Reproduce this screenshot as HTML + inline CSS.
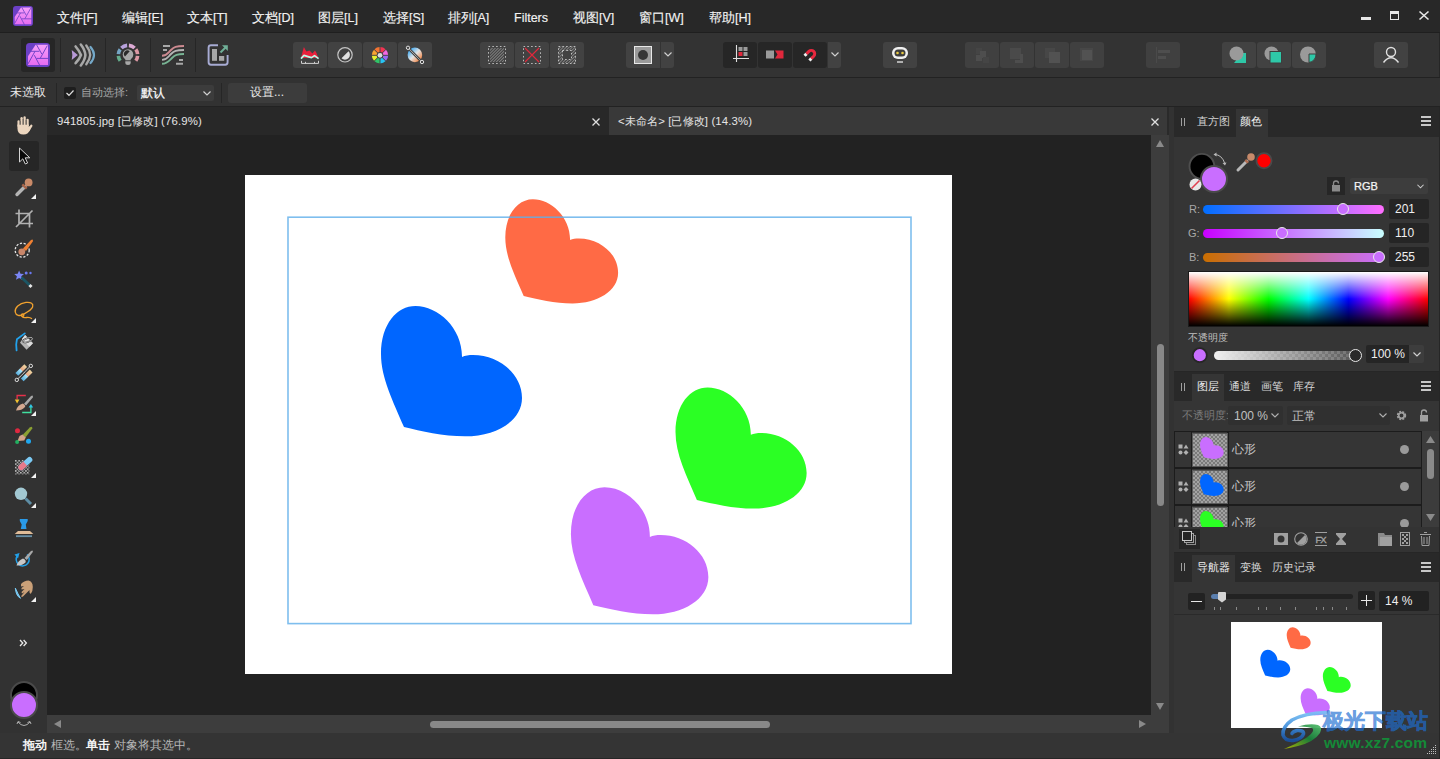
<!DOCTYPE html>
<html><head><meta charset="utf-8">
<style>
*{margin:0;padding:0;box-sizing:border-box}
html,body{width:1440px;height:759px;overflow:hidden;background:#2b2b2b;font-family:"Liberation Sans",sans-serif;font-size:12px;color:#e6e6e6}
.a{position:absolute}
.t{position:absolute;white-space:nowrap;line-height:1}
svg{position:absolute;overflow:visible}
.mn{position:absolute;top:12px;font-size:12.5px;color:#f2f2f2;-webkit-text-stroke:0.15px #f2f2f2;white-space:nowrap;line-height:1}
.b34{position:absolute;width:34px;height:26px;top:42px;background:#424242;border-radius:3px}
.bd{position:absolute;width:34px;height:26px;top:42px;background:#262626;border-radius:3px}
.bx{position:absolute;width:34px;height:26px;top:42px;background:#404040;border-radius:3px}
.sep{position:absolute;top:38px;width:1px;height:34px;background:#262626}
.ptab{position:absolute;font-size:11px;color:#d4d4d4;white-space:nowrap;line-height:1}
</style></head><body>
<svg width="0" height="0" style="position:absolute"><defs>
<linearGradient id="lg" x1="0" y1="0" x2="0" y2="1"><stop offset="0" stop-color="#f6a0fa"/><stop offset="1" stop-color="#e66cf2"/></linearGradient>
<symbol id="aplogo" viewBox="0 0 24 24">
<rect x="0" y="0" width="24" height="24" rx="3.5" fill="#6c40c6"/>
<path d="M9.6 1.8 L22 1.8 L22 22 L2 22 L2 13.2 Z" fill="url(#lg)"/>
<path d="M10.5 1.7 L15.8 11 M21.3 2.6 L14.2 15.4 M22.5 15.4 L10.4 15.4 M8.3 12.2 L13.8 22.5 M9 8.3 L2 20.9 M4.6 8.3 L13.4 8.3" stroke="#6c40c6" stroke-width="0.95" fill="none"/>
</symbol></defs></svg>
<!-- ============ MENU BAR ============ -->
<div class="a" style="left:0;top:0;width:1440px;height:32px;background:#282828"></div>
<div class="a" style="left:0;top:32px;width:1440px;height:1px;background:#1f1f1f"></div>
<!-- app logo -->
<svg style="left:13px;top:6px" width="20" height="20"><use href="#aplogo"/></svg>
<div class="mn" style="left:57px">文件[F]</div>
<div class="mn" style="left:122px">编辑[E]</div>
<div class="mn" style="left:187px">文本[T]</div>
<div class="mn" style="left:252px">文档[D]</div>
<div class="mn" style="left:318px">图层[L]</div>
<div class="mn" style="left:383px">选择[S]</div>
<div class="mn" style="left:448px">排列[A]</div>
<div class="mn" style="left:514px">Filters</div>
<div class="mn" style="left:573px">视图[V]</div>
<div class="mn" style="left:639px">窗口[W]</div>
<div class="mn" style="left:709px">帮助[H]</div>
<!-- window controls -->
<div class="a" style="left:1361px;top:17px;width:10px;height:3px;background:#e6e6e6"></div>
<div class="a" style="left:1390px;top:11px;width:9px;height:9px;border:1.5px solid #e6e6e6;border-top-width:3px"></div>
<svg style="left:1419px;top:11px" width="10" height="9" viewBox="0 0 10 9"><path d="M0.5 0.5 L9.5 8.5 M9.5 0.5 L0.5 8.5" stroke="#e6e6e6" stroke-width="1.6"/></svg>

<!-- ============ TOOLBAR ============ -->
<div class="a" style="left:0;top:33px;width:1440px;height:44px;background:#333333"></div>
<div class="a" style="left:0;top:77px;width:1440px;height:1px;background:#222"></div>
<div class="a" style="left:21px;top:38px;width:34px;height:34px;background:#262626;border-radius:3px"></div>
<svg style="left:26px;top:43px" width="24" height="24"><use href="#aplogo"/></svg>
<div class="sep" style="left:60px"></div>
<div class="sep" style="left:105px"></div>
<div class="sep" style="left:150px"></div>
<div class="sep" style="left:195px"></div>
<!-- liquify persona -->
<svg style="left:68px;top:40px" width="30" height="30" viewBox="0 0 30 30">
<path d="M3.7 10 L9.8 15 L3.7 20 Q5 15 3.7 10 Z" fill="#b89ad8"/>
<path d="M7.6 6.5 Q11.5 11 13 15 Q11.5 19 7.6 23.2" stroke="#a8a8a8" stroke-width="2.6" fill="none" stroke-linecap="round"/>
<path d="M12.8 4.5 Q17 10 17.4 15 Q17 20 12.8 25.5" stroke="#a8a8a8" stroke-width="2.6" fill="none" stroke-linecap="round"/>
<path d="M18.3 5.5 Q21.8 10 22.2 15 Q21.8 20 18.3 24.3" stroke="#a8a8a8" stroke-width="2.4" fill="none" stroke-linecap="round"/>
<path d="M22.5 7 Q26 11 26 15 Q26 19 22.5 23" stroke="#74a8c8" stroke-width="2.2" fill="none" stroke-linecap="round"/>
</svg>
<!-- develop persona -->
<svg style="left:116px;top:43px" width="24" height="24" viewBox="0 0 24 24">
<g transform="translate(12 12)" fill="none" stroke-width="3.6">
<path d="M-0.9 -9.6 A9.6 9.6 0 0 0 -6.6 -7" stroke="#b8a2dc"/>
<path d="M0.9 -9.6 A9.6 9.6 0 0 1 6.6 -7" stroke="#dcaad4"/>
<path d="M7.8 -5.6 A9.6 9.6 0 0 1 9.6 -0.8" stroke="#dc98a4"/>
<path d="M9.6 0.8 A9.6 9.6 0 0 1 7.8 5.8" stroke="#dc98a4"/>
<path d="M-7.8 -5.6 A9.6 9.6 0 0 0 -9.6 -0.8" stroke="#74a4c4"/>
<path d="M-9.6 0.8 A9.6 9.6 0 0 0 -7.8 5.8" stroke="#64ac8c"/>
</g>
<circle cx="12" cy="11.5" r="5.3" fill="#a8a8a8"/>
<path d="M9 13.4 L13.7 8.3 A3.47 3.47 0 0 0 9 13.4 Z" fill="#2a2a2a"/>
<rect x="9.3" y="15.5" width="5.4" height="1.8" fill="#a8a8a8"/>
<path d="M9.3 18.2 L14.7 18.2 L14.7 19.5 Q14.7 22 12 22 Q9.3 22 9.3 19.5 Z" fill="#a8a8a8"/>
</svg>
<!-- tone mapping + export -->
<svg style="left:155px;top:38px" width="80" height="34" viewBox="155 38 80 34">
<g stroke-width="1.9" fill="none" stroke-linecap="butt">
<path d="M163 46 L170 46 M163 50 L167 50 M179 60 L183 60 M176 63.8 L183 63.8" stroke="#a8a8a8"/>
<path d="M162 55.8 C167 55.8 168 53 171 50 C174 47 176 46 184 46" stroke="#cc8a90"/>
<path d="M162 59.9 C167 59.9 168 57 171 54 C174 51 176 50 184 50" stroke="#b4b4b4"/>
<path d="M162 63.8 C167 63.8 169 61 172 58 C175 55 177 54 184 54" stroke="#78b494"/>
</g>
<path d="M218 45.2 L211 45.2 Q208.6 45.2 208.6 47.6 L208.6 62.3 Q208.6 64.7 211 64.7 L225.2 64.7 Q227.6 64.7 227.6 62.3 L227.6 55" stroke="#a8acd4" stroke-width="1.9" fill="none"/>
<rect x="212" y="49" width="5" height="11.8" fill="#a8a8a8"/>
<rect x="219" y="56" width="5.2" height="4.8" fill="#a8a8a8"/>
<path d="M220.5 52.5 L226.5 46.5" stroke="#70b098" stroke-width="1.9"/>
<path d="M222 45.3 L227.8 45.3 L227.8 51 Z" fill="#70b098"/>
</svg>
<!-- adjustment buttons -->
<div class="b34" style="left:293px"></div>
<div class="b34" style="left:328px"></div>
<div class="b34" style="left:363px"></div>
<div class="b34" style="left:398px"></div>
<svg style="left:290px;top:40px" width="70" height="30" viewBox="290 40 70 30">
<path d="M301.5 56 L302.5 52 L303.9 47 L305.5 50 L306.5 51.5 L309.5 50.5 L312.5 53.5 L315 50.5 L316.5 53 L317.8 56.5 L317.8 58 L301.5 58 Z" fill="#e8203c"/>
<path d="M301 58.6 L304 55.4 L308 56.6 L311.5 57.6 L314.5 55.6 L318.6 58.6" stroke="#bcf8e8" stroke-width="1.7" fill="none" stroke-linejoin="round"/>
<path d="M301.5 60.8 L301.5 63.4 L318.5 63.4 L318.5 60.8 M305.5 61.8 L305.5 63.4 M314.5 61.8 L314.5 63.4" stroke="#d0d0d0" stroke-width="1" fill="none"/>
<circle cx="345" cy="54.8" r="7.2" stroke="#c4c4c4" stroke-width="1.2" fill="none"/>
<path d="M341.5 58.3 L348.5 51.3 A4.95 4.95 0 0 1 341.5 58.3 Z" fill="#e2e2e2"/>
</svg>
<svg style="left:366px;top:42px" width="64" height="26" viewBox="366 42 64 26">
<g transform="translate(380 55.3)">
<path d="M0 0 L0 -8.2 A8.2 8.2 0 0 1 5.8 -5.8 Z" fill="#f23452"/>
<path d="M0 0 L5.8 -5.8 A8.2 8.2 0 0 1 8.2 0 Z" fill="#f468e4"/>
<path d="M0 0 L8.2 0 A8.2 8.2 0 0 1 5.8 5.8 Z" fill="#9868f4"/>
<path d="M0 0 L5.8 5.8 A8.2 8.2 0 0 1 0 8.2 Z" fill="#28c4f4"/>
<path d="M0 0 L0 8.2 A8.2 8.2 0 0 1 -5.8 5.8 Z" fill="#30c468"/>
<path d="M0 0 L-5.8 5.8 A8.2 8.2 0 0 1 -8.2 0 Z" fill="#e4f030"/>
<path d="M0 0 L-8.2 0 A8.2 8.2 0 0 1 -5.8 -5.8 Z" fill="#f8a432"/>
<path d="M0 0 L-5.8 -5.8 A8.2 8.2 0 0 1 0 -8.2 Z" fill="#f47432"/>
<path d="M0 -9 L0 9 M-9 0 L9 0 M-6.5 -6.5 L6.5 6.5 M6.5 -6.5 L-6.5 6.5" stroke="#424242" stroke-width="0.9"/>
<circle r="3.3" fill="#424242"/>
<circle r="2.4" fill="#dcdcdc"/>
</g>
<defs><linearGradient id="bw2" x1="0" y1="0" x2="1" y2="1"><stop offset="0.1" stop-color="#2ea4f4"/><stop offset="0.5" stop-color="#e4e4e4"/><stop offset="0.9" stop-color="#f47c34"/></linearGradient></defs>
<circle cx="414.9" cy="54.9" r="7.3" fill="url(#bw2)"/>
<path d="M408 47.8 L422 62" stroke="#424242" stroke-width="2.6"/>
<path d="M408 47.8 L422 62" stroke="#e0e0e0" stroke-width="1" stroke-dasharray="1 0.5"/>
<circle cx="408" cy="47.8" r="1.7" fill="#424242" stroke="#e0e0e0" stroke-width="1"/>
<circle cx="422" cy="62" r="1.7" fill="#424242" stroke="#e0e0e0" stroke-width="1"/>
</svg>
<!-- selection buttons -->
<div class="b34" style="left:480px"></div>
<div class="b34" style="left:515px"></div>
<div class="b34" style="left:550px"></div>
<svg style="left:488px;top:46px" width="18" height="18" viewBox="0 0 18 18">
<defs><pattern id="hatch" width="2.1" height="2.1" patternUnits="userSpaceOnUse" patternTransform="rotate(45)"><rect width="0.8" height="2.1" fill="#8c8c8c"/></pattern></defs>
<rect x="2" y="2" width="14" height="14" fill="url(#hatch)"/>
<rect x="0.5" y="0.5" width="17" height="17" fill="none" stroke="#c8c8c8" stroke-dasharray="1.6 2.2" stroke-width="0.9"/>
</svg>
<svg style="left:523px;top:46px" width="18" height="18" viewBox="0 0 18 18">
<rect x="0.5" y="0.5" width="17" height="17" fill="none" stroke="#c8c8c8" stroke-dasharray="1.6 2.2" stroke-width="0.9"/>
<path d="M2 2 L16 16 M16 2 L2 16" stroke="#e0283c" stroke-width="1.2"/>
</svg>
<svg style="left:558px;top:46px" width="18" height="18" viewBox="0 0 18 18">
<rect x="0.5" y="0.5" width="17" height="17" fill="url(#hatch)" stroke="#c8c8c8" stroke-dasharray="1.6 2.2" stroke-width="0.9"/>
<rect x="4.5" y="4.5" width="9" height="9" fill="#424242" stroke="#d0d0d0" stroke-dasharray="1.6 2.2" stroke-width="0.9"/>
</svg>
<!-- quick mask -->
<div class="a" style="left:626px;top:42px;width:34px;height:26px;background:#424242;border-radius:3px 0 0 3px"></div>
<div class="a" style="left:661px;top:42px;width:13px;height:26px;background:#424242;border-radius:0 3px 3px 0"></div>
<div class="a" style="left:634px;top:46px;width:18px;height:18px;background:#9a9a9a;border:1.5px solid #e8e8e8"></div>
<div class="a" style="left:638px;top:50px;width:10px;height:10px;background:#363636;border-radius:50%"></div>
<svg style="left:664px;top:52px" width="8" height="5" viewBox="0 0 8 5"><path d="M0.5 0.5 L4 4 L7.5 0.5" stroke="#d0d0d0" stroke-width="1.2" fill="none"/></svg>
<!-- snapping -->
<div class="bd" style="left:723px"></div>
<div class="bd" style="left:758px"></div>
<div class="bd" style="left:793px"></div>
<div class="a" style="left:828px;top:42px;width:13px;height:26px;background:#424242;border-radius:0 3px 3px 0"></div>
<svg style="left:831px;top:52px" width="8" height="5" viewBox="0 0 8 5"><path d="M0.5 0.5 L4 4 L7.5 0.5" stroke="#d0d0d0" stroke-width="1.2" fill="none"/></svg>
<svg style="left:733px;top:45px" width="17" height="17" viewBox="0 0 17 17">
<path d="M3.5 0 L3.5 17 M0 13.5 L16 13.5" stroke="#e0e0e0" stroke-width="1.1"/>
<rect x="5.5" y="2" width="4" height="4" fill="#9a9a9a"/><rect x="10.5" y="2" width="4" height="4" fill="#9a9a9a"/>
<rect x="5.5" y="7" width="4" height="4" fill="#e0283c"/><rect x="10.5" y="7" width="4" height="4" fill="#9a9a9a"/>
</svg>
<svg style="left:766px;top:50px" width="18" height="9" viewBox="0 0 18 9">
<rect x="0" y="0.5" width="8" height="8" fill="#9a9a9a"/>
<path d="M9 0.5 L17.5 0.5 L17.5 8.5 L9 8.5 L11.5 4.5 Z" fill="#e0283c"/>
</svg>
<svg style="left:795px;top:42px" width="32" height="26" viewBox="795 42 32 26">
<g transform="translate(811.3 53.8) rotate(45)">
<path d="M-3.4 3.5 L-3.4 0 A3.4 3.4 0 0 1 3.4 0 L3.4 3.5" stroke="#e8283e" stroke-width="3" fill="none"/>
<rect x="-4.9" y="3.5" width="3" height="2.6" fill="#f0f0f0"/>
<rect x="1.9" y="3.5" width="3" height="2.6" fill="#f0f0f0"/>
</g>
</svg>
<!-- assistant -->
<div class="b34" style="left:883px"></div>
<svg style="left:891px;top:46px" width="18" height="18" viewBox="0 0 18 18">
<rect x="1" y="1" width="16" height="12" rx="6" fill="#f0f0f0"/>
<rect x="3.5" y="3.5" width="11" height="7" rx="3.5" fill="#3d3d3d"/>
<circle cx="6.5" cy="7" r="1.3" fill="#e8c840"/><circle cx="11.5" cy="7" r="1.3" fill="#e8c840"/>
<rect x="6" y="15" width="6" height="2" fill="#b0b0b0"/>
</svg>
<!-- disabled arrange -->
<div class="bx" style="left:965px"></div>
<div class="bx" style="left:1000px"></div>
<div class="bx" style="left:1035px"></div>
<div class="bx" style="left:1070px"></div>
<div class="bx" style="left:1146px"></div>
<svg style="left:973px;top:46px" width="18" height="18" viewBox="0 0 18 18" opacity="0.55">
<rect x="3" y="2" width="6" height="6" fill="#4a4a4a"/><rect x="3" y="9" width="6" height="6" fill="#5a5a5a"/><rect x="7" y="5" width="6" height="7" fill="#5a5a5a"/><rect x="10" y="11" width="6" height="6" fill="#4a4a4a"/>
</svg>
<svg style="left:1008px;top:46px" width="18" height="18" viewBox="0 0 18 18">
<rect x="2" y="2" width="11" height="11" fill="#4a4a4a"/><path d="M15 8 L15 17 L7 17 L7 14 L12 14 L12 8 Z" fill="#4e4e4e"/>
</svg>
<svg style="left:1043px;top:46px" width="18" height="18" viewBox="0 0 18 18">
<rect x="2" y="2" width="10" height="10" fill="#474747"/><rect x="6" y="6" width="11" height="11" fill="#525252"/>
</svg>
<svg style="left:1078px;top:46px" width="18" height="18" viewBox="0 0 18 18">
<rect x="2" y="2" width="13" height="13" fill="#474747"/><rect x="4" y="4" width="10" height="10" fill="#525252"/>
</svg>
<svg style="left:1154px;top:46px" width="18" height="18" viewBox="0 0 18 18">
<rect x="2" y="1" width="1" height="16" fill="#4a4a4a"/><rect x="4" y="4" width="12" height="3" fill="#4e4e4e"/><rect x="4" y="10" width="8" height="3" fill="#4e4e4e"/>
</svg>
<!-- geometry -->
<div class="b34" style="left:1222px"></div>
<div class="b34" style="left:1257px"></div>
<div class="b34" style="left:1292px"></div>
<svg style="left:1229px;top:46px" width="20" height="18" viewBox="0 0 20 18">
<path d="M9 12 L17 12 L17 17 L5 17 Z" fill="#2ec8a8"/><path d="M12 7 L17 7 L17 17 L7 17 Z" fill="#2ec8a8"/>
<circle cx="7.5" cy="7.5" r="7" fill="#9a9a9a"/>
</svg>
<svg style="left:1264px;top:46px" width="20" height="18" viewBox="0 0 20 18">
<circle cx="7.5" cy="7.5" r="7" fill="#9a9a9a"/>
<rect x="6" y="5.5" width="11.5" height="11.5" fill="#2ec8a8" stroke="#3d3d3d" stroke-width="1"/>
</svg>
<svg style="left:1300px;top:46px" width="20" height="18" viewBox="0 0 20 18">
<circle cx="8" cy="8.5" r="8" fill="#9a9a9a"/>
<path d="M9 8 L16 8 A8 8 0 0 1 9 16.5 Z" fill="#2ec8a8" stroke="#3d3d3d" stroke-width="1"/>
</svg>
<div class="b34" style="left:1374px"></div>
<svg style="left:1382px;top:46px" width="18" height="17" viewBox="0 0 18 17">
<circle cx="9" cy="6" r="4.5" stroke="#e0e0e0" stroke-width="1.4" fill="none"/>
<path d="M1.5 16.5 Q9 7 16.5 16.5" stroke="#e0e0e0" stroke-width="1.4" fill="none"/>
</svg>
<div class="a" style="left:1439px;top:33px;width:1px;height:44px;background:#262626"></div>

<!-- ============ CONTEXT BAR ============ -->
<div class="a" style="left:0;top:78px;width:1440px;height:28px;background:#323232"></div>
<div class="a" style="left:0;top:106px;width:1440px;height:1px;background:#222"></div>
<div class="t" style="left:10px;top:86px;font-size:12px;color:#e8e8e8">未选取</div>
<div class="a" style="left:56px;top:83px;width:1px;height:20px;background:#262626"></div>
<div class="a" style="left:64px;top:87px;width:12px;height:12px;background:#1e1e1e;border-radius:2px"></div>
<svg style="left:66px;top:90px" width="8" height="6" viewBox="0 0 8 6"><path d="M0.5 3 L3 5.3 L7.5 0.5" stroke="#e0e0e0" stroke-width="1.2" fill="none"/></svg>
<div class="t" style="left:81px;top:87px;font-size:11px;color:#a8a8a8">自动选择:</div>
<div class="a" style="left:137px;top:85px;width:77px;height:16px;background:#3c3c3c;border-radius:2px"></div>
<div class="t" style="left:141px;top:87px;font-size:12px;color:#ffffff;-webkit-text-stroke:0.2px #fff">默认</div>
<svg style="left:203px;top:91px" width="8" height="5" viewBox="0 0 8 5"><path d="M0.5 0.5 L4 4 L7.5 0.5" stroke="#d0d0d0" stroke-width="1.2" fill="none"/></svg>
<div class="a" style="left:221px;top:83px;width:1px;height:20px;background:#262626"></div>
<div class="a" style="left:228px;top:83px;width:79px;height:20px;background:#3c3c3c;border-radius:3px"></div>
<div class="t" style="left:250px;top:86px;font-size:12px;color:#e8e8e8">设置...</div>

<!-- ============ TOOLS PANEL ============ -->
<div class="a" style="left:0;top:107px;width:47px;height:626px;background:#323232"></div>
<!-- tool icons -->
<div class="a" style="left:9px;top:141px;width:30px;height:30px;background:#262626;border-radius:3px"></div>
<svg style="left:0;top:107px" width="47" height="520" viewBox="0 107 47 520">
<defs><path id="tri" d="M36 0 L36 5 L31 5 Z" fill="#f2f2f2"/></defs>
<!-- hand -->
<g stroke="#ecd6bf" stroke-width="2.3" stroke-linecap="round" fill="none">
<path d="M18.6 126 L18.6 121.5"/><path d="M21.6 125 L21.6 118.2"/><path d="M24.6 125 L24.6 117.4"/><path d="M27.6 125.5 L27.6 119.8"/>
<path d="M28.5 130 L31.3 125.8"/>
</g>
<path d="M17.45 124.5 L28.75 124.5 L28.75 127 L30 126 L30.5 129 Q28.5 134.5 23.5 134.5 Q17.45 134.5 17.45 128.5 Z" fill="#ecd6bf"/>
<path d="M20.1 121 L20.1 125 M23.1 119 L23.1 125 M26.1 120 L26.1 125" stroke="#323232" stroke-width="0.7" opacity="0.7"/>
<!-- move -->
<path d="M19.5 148 L19.5 162 L22.8 158.8 L25.3 164 L27.6 163 L25.2 157.8 L29.8 157.8 Z" fill="#080808" stroke="#d4d4d4" stroke-width="1" stroke-linejoin="round"/>
<!-- colour picker -->
<path d="M17 194.5 L25 186.5" stroke="#b4b4b4" stroke-width="3.4" stroke-linecap="round"/>
<path d="M23.2 183.5 L27.5 187.8 L25.8 189.5 L21.5 185.2 Z" fill="#a86448"/>
<circle cx="28.6" cy="182.4" r="3.9" fill="#c98a68"/>
<use href="#tri" y="194"/>
<!-- crop -->
<path d="M19 209.5 L19 223.5 L33 223.5 M15.5 213.5 L29.5 213.5 L29.5 227.5 M16 227 L32.5 210.5" stroke="#b2b2b2" stroke-width="1.7" fill="none"/>
<!-- selection brush -->
<circle cx="22.2" cy="250.2" r="7" stroke="#e6e6e6" stroke-width="1.3" stroke-dasharray="2.2 1.6" fill="none"/>
<path d="M23 248.5 L31 240 Q33.5 238.5 32.8 241.5 L26 251 Z" fill="#f08032"/>
<circle cx="21.8" cy="251.8" r="3.4" fill="#c8866a"/>
<!-- flood select -->
<path d="M19.1 270.5 L20.5 273.8 L24 274 L21.3 276.3 L22.2 279.8 L19.1 277.9 L16 279.8 L16.9 276.3 L14.2 274 L17.7 273.8 Z" fill="#7a86f4"/>
<circle cx="26.2" cy="273" r="1.5" fill="#6a78f0"/><circle cx="30.5" cy="273" r="1.2" fill="#6a78f0"/>
<path d="M21.5 277.5 L30 285.5" stroke="#1c5664" stroke-width="2.8"/>
<path d="M29.5 285 L31.5 287" stroke="#e8e8e8" stroke-width="3"/>
<!-- freehand -->
<g stroke="#f2a22e" stroke-width="1.3" fill="none">
<path d="M22.9 314.6 C20 316.2 15.8 315.8 15.2 312 C14.6 308 19 303.2 26 302.4 C31.2 301.9 33.6 303.8 32.6 307 C31.6 310 26.5 312.6 22.9 314.6"/>
<circle cx="22.6" cy="315.2" r="1.2"/>
<path d="M21.8 316.4 Q23.5 318.2 26.6 317.5 Q29.8 317 32 318.8"/>
</g>
<use href="#tri" y="318"/>
<!-- fill -->
<path d="M24.8 333.4 L16.9 339.3 L16.2 344.5 L16.6 350.4" stroke="#22a2ec" stroke-width="1.8" fill="none" stroke-linejoin="round" stroke-linecap="round"/>
<path d="M25.1 335 L32.9 343.2 L26.6 349.8 L20 342.8 Z" fill="#b4b4b4"/>
<path d="M25.1 335 L32.9 343.2 L29.5 346.8 L21.8 339 Z" fill="#dcdcdc"/>
<ellipse cx="27.8" cy="340" rx="5" ry="1.8" transform="rotate(-20 27.8 340)" stroke="#333" stroke-width="1.5" fill="none"/>
<ellipse cx="27.8" cy="340" rx="5" ry="1.8" transform="rotate(-20 27.8 340)" stroke="#cccccc" stroke-width="0.7" fill="none"/>
<!-- gradient -->
<defs><linearGradient id="gt" x1="0" y1="1" x2="1" y2="0"><stop offset="0" stop-color="#3a98d0"/><stop offset="0.48" stop-color="#a8e4fa"/><stop offset="0.52" stop-color="#e8a888"/><stop offset="1" stop-color="#f0e4a8"/></linearGradient></defs>
<path d="M15.4 373.1 L24.3 364.2 L27.1 366.9 L18.2 375.8 Z" fill="url(#gt)"/>
<path d="M20.9 378.5 L29.8 369.6 L32.5 372.4 L23.6 381.3 Z" fill="url(#gt)"/>
<path d="M17.8 378.9 L29.8 366.9" stroke="#e0e0e0" stroke-width="1.1" stroke-dasharray="0.9 0.6"/>
<circle cx="16.8" cy="379.9" r="1.7" fill="#323232" stroke="#e0e0e0" stroke-width="1"/>
<circle cx="30.8" cy="365.9" r="1.7" fill="#323232" stroke="#e0e0e0" stroke-width="1"/>
<!-- colour replacement -->
<path d="M25.8 395.5 L17.1 395.5 L17.1 399.5" stroke="#e8304a" stroke-width="1.3" fill="none"/>
<path d="M14.8 399.5 L19.4 399.5 L17.1 403.5 Z" fill="#f0c030"/>
<path d="M24 403.8 L31 396 Q33.5 394.5 32.8 397.5 L26 405.5 Z" fill="#a8a8a8"/>
<path d="M16 410.5 Q17.5 405 23 403.5 Q26 405.5 25 407 Q22 410.5 16 410.5 Z" fill="#d4a890"/>
<path d="M22.2 412.5 L30.9 412.5 L30.9 407" stroke="#40e0a0" stroke-width="1.3" fill="none"/>
<path d="M28.6 407.5 L33.2 407.5 L30.9 404 Z" fill="#30c8e8"/>
<use href="#tri" y="411"/>
<!-- paint brush -->
<path d="M22.5 435 L29.8 427.5 Q32.5 425.5 32.3 428.5 L25.5 437.5 Z" fill="#8aa032"/>
<path d="M17.5 441 L19.5 436 L22.5 434.5 L25.8 437.5 L24.2 440.5 Z" fill="#d4a48a"/>
<circle cx="17.5" cy="430.7" r="2.5" fill="#e02840"/>
<circle cx="17.1" cy="442.1" r="2" fill="#20b060"/>
<circle cx="28.5" cy="441.3" r="2.5" fill="#20a8f0"/>
<!-- erase -->
<defs><pattern id="dots" x="15" y="460" width="3.4" height="3.4" patternUnits="userSpaceOnUse"><rect width="1.5" height="1.5" fill="#c4c4c4"/><rect x="1.7" y="1.7" width="1.5" height="1.5" fill="#c4c4c4"/></pattern></defs>
<rect x="15" y="460" width="14.4" height="14.4" fill="url(#dots)"/>
<g transform="translate(25.3 463.6) rotate(-42)">
<rect x="-9" y="-3.2" width="18" height="6.4" fill="#323232"/>
<rect x="-8.5" y="-2.8" width="17" height="5.6" rx="2.8" fill="#7ccaf4"/>
<path d="M0 -2.8 L-5.7 -2.8 A2.8 2.8 0 0 0 -5.7 2.8 L0 2.8 Z" fill="#e87a8a"/>
</g>
<use href="#tri" y="473"/>
<!-- zoom -->
<circle cx="21" cy="493.8" r="6.2" fill="#a2c8d2"/>
<path d="M25.5 498.5 L31 504" stroke="#5e8ea6" stroke-width="3"/>
<use href="#tri" y="503"/>
<!-- clone -->
<path d="M19.8 519 L27.7 519 L27.7 521 L25.8 524.5 L26.5 529 L20.8 529 L21.7 524.5 L19.8 521 Z" fill="#2a9ae8"/>
<path d="M18 531 L30 531 L33.3 534 L14.7 534 Z" fill="#e0bc98"/>
<rect x="16" y="535.3" width="16" height="1.8" fill="#6890a8"/>
<!-- restore / dodge -->
<path d="M17.5 555.5 A6.5 6.5 0 1 0 27 554.5" stroke="#22a0e8" stroke-width="1.5" fill="none"/>
<path d="M14.5 554.5 L19.5 553 L18 558.5 Z" fill="#22a0e8"/>
<path d="M24.5 558 L31 551 Q33.3 549.5 32.8 552 L26.8 560 Z" fill="#a8a8a8"/>
<path d="M16.5 565.5 Q18 560.5 23 558.5 Q26.5 560 25.5 562.5 Q22 566 16.5 565.5 Z" fill="#c8c8c8"/>
<!-- smudge -->
<path d="M21 584 Q24 580.5 28.5 580.5 Q32.8 581.5 32.8 587 Q32.8 591.5 31 593.5 Q30 594 29.5 592.5 L29.5 590 L23 596.5 Q21.5 597.5 21.2 596 L24.5 592 L22 593.5 L21.5 592 L24.5 589 L21.5 589.5 L21.5 588 L24 586 L21 586.5 Z" fill="#caa078"/>
<path d="M15.3 588 Q16 596 20.5 598.3 Q18 594 15.3 588 Z" fill="#7ac8f0" stroke="#7ac8f0" stroke-width="1"/>
<use href="#tri" y="597"/>
</svg>
<svg style="left:19px;top:639px" width="9" height="8" viewBox="0 0 9 8"><path d="M1 1 L3.8 4 L1 7 M4.6 1 L7.4 4 L4.6 7" stroke="#e8e8e8" stroke-width="1.3" fill="none"/></svg>
<!-- colour wells -->
<div class="a" style="left:10px;top:681px;width:28px;height:28px;border-radius:50%;background:#000;border:2px solid #4a4a4a"></div>
<div class="a" style="left:10px;top:691px;width:28px;height:28px;border-radius:50%;background:#c96eff;border:2px solid #4a4a4a"></div>
<svg style="left:17px;top:721px" width="14" height="7" viewBox="0 0 14 7">
<path d="M1 1 Q7 8 13 1 M0 3 L1 0.5 L3.5 1.5 M14 3 L13 0.5 L10.5 1.5" stroke="#b0b0b0" stroke-width="1" fill="none"/>
</svg>

<!-- ============ DOC TABS / CANVAS ============ -->
<div class="a" style="left:47px;top:107px;width:563px;height:28px;background:#282828"></div>
<div class="t" style="left:57px;top:116px;font-size:11.4px;letter-spacing:0.12px;color:#e4e4e4">941805.jpg [已修改] (76.9%)</div>
<svg style="left:592px;top:118px" width="8" height="8" viewBox="0 0 8 8"><path d="M0.5 0.5 L7.5 7.5 M7.5 0.5 L0.5 7.5" stroke="#e0e0e0" stroke-width="1.3"/></svg>
<div class="a" style="left:609px;top:107px;width:559px;height:28px;background:#393939"></div>
<div class="t" style="left:618px;top:116px;font-size:11.4px;letter-spacing:0.12px;color:#e4e4e4">&lt;未命名&gt; [已修改] (14.3%)</div>
<svg style="left:1151px;top:118px" width="8" height="8" viewBox="0 0 8 8"><path d="M0.5 0.5 L7.5 7.5 M7.5 0.5 L0.5 7.5" stroke="#e0e0e0" stroke-width="1.3"/></svg>
<div class="a" style="left:1168px;top:107px;width:6px;height:626px;background:#323232"></div>
<div class="a" style="left:1167px;top:107px;width:2px;height:28px;background:#2a2a2a"></div>
<div class="a" style="left:47px;top:135px;width:1104px;height:580px;background:#222222"></div>
<div class="a" style="left:1151px;top:135px;width:18px;height:598px;background:#3d3d3d"></div>
<div class="a" style="left:47px;top:715px;width:1104px;height:18px;background:#3d3d3d"></div>
<!-- scroll arrows -->
<svg style="left:1156px;top:140px" width="8" height="7" viewBox="0 0 8 7"><path d="M0 7 L4 0 L8 7 Z" fill="#8a8a8a"/></svg>
<svg style="left:1156px;top:703px" width="8" height="7" viewBox="0 0 8 7"><path d="M0 0 L4 7 L8 0 Z" fill="#8a8a8a"/></svg>
<svg style="left:54px;top:720px" width="7" height="8" viewBox="0 0 7 8"><path d="M7 0 L0 4 L7 8 Z" fill="#8a8a8a"/></svg>
<svg style="left:1139px;top:720px" width="7" height="8" viewBox="0 0 7 8"><path d="M0 0 L7 4 L0 8 Z" fill="#8a8a8a"/></svg>
<div class="a" style="left:1157px;top:344px;width:7px;height:162px;background:#888;border-radius:4px"></div>
<div class="a" style="left:430px;top:721px;width:340px;height:7px;background:#888;border-radius:4px"></div>
<!-- document -->
<div class="a" style="left:245px;top:175px;width:707px;height:499px;background:#fff"></div>
<svg style="left:0;top:0" width="1440" height="759" viewBox="0 0 1440 759">
<defs><path id="hrt" d="M23 121 C12 95 0 72 0 48 C0 18 16 0 34.5 0 C57 0 81 22 81 50.5 L81 51 C84 49.5 88 49 92 49 C118 49 141 68 141 92 C141 115 115 130.3 84 130.3 C62 130.3 40 125 23 121 Z"/></defs>
<use href="#hrt" fill="#ff6a45" transform="translate(505.3 199.2) scale(0.8)"/>
<use href="#hrt" fill="#0066ff" transform="translate(381 306)"/>
<use href="#hrt" fill="#2bff24" transform="translate(675.5 387.4) scale(0.93)"/>
<use href="#hrt" fill="#c96eff" transform="translate(570.9 487.2) scale(0.975)"/>
<rect x="288" y="217.2" width="623" height="406.4" fill="none" stroke="#5eaeea" stroke-opacity="0.8" stroke-width="1.6"/>
</svg>

<!-- ============ STATUS BAR ============ -->
<div class="a" style="left:0;top:733px;width:1440px;height:26px;background:#343434"></div>
<div class="t" style="left:23px;top:739px;font-size:12px;color:#f4f4f4;font-weight:bold">拖动</div>
<div class="t" style="left:51px;top:739px;font-size:12px;color:#b8b8b8">框选。</div>
<div class="t" style="left:86px;top:739px;font-size:12px;color:#f4f4f4;font-weight:bold">单击</div>
<div class="t" style="left:114px;top:739px;font-size:12px;color:#b8b8b8">对象将其选中。</div>

<!-- ============ RIGHT PANEL ============ -->
<div class="a" style="left:1174px;top:107px;width:266px;height:626px;background:#353535"></div>
<div class="a" style="left:1439px;top:107px;width:1px;height:652px;background:#262626"></div>
<!-- color panel header -->
<div class="a" style="left:1174px;top:107px;width:265px;height:30px;background:#292929"></div>
<div class="a" style="left:1236px;top:109px;width:32px;height:28px;background:#353535"></div>
<div class="a" style="left:1181px;top:118px;width:1px;height:8px;background:#a0a0a0"></div>
<div class="a" style="left:1184px;top:118px;width:1px;height:8px;background:#a0a0a0"></div>
<div class="ptab" style="left:1197px;top:116px">直方图</div>
<div class="ptab" style="left:1240px;top:116px;color:#f0f0f0">颜色</div>
<div class="a" style="left:1421px;top:116px;width:10px;height:2px;background:#c8c8c8;box-shadow:0 4px 0 #c8c8c8,0 8px 0 #c8c8c8"></div>
<!-- swatches -->
<svg style="left:1186px;top:151px" width="31" height="31" viewBox="0 0 31 31"><circle cx="15.9" cy="15.3" r="12.4" fill="#000" stroke="#4e4e4e" stroke-width="1.9"/></svg>
<div class="a" style="left:1200px;top:165px;width:28px;height:28px;border-radius:50%;background:#c96eff;border:2px solid #4a4a4a"></div>
<svg style="left:1189px;top:178px" width="13" height="13" viewBox="0 0 13 13">
<circle cx="6.5" cy="6.5" r="6" fill="#e8e8e8"/><path d="M2.5 10.5 L10.5 2.5" stroke="#e04050" stroke-width="1.6"/>
</svg>
<svg style="left:1213px;top:153px" width="14" height="14" viewBox="0 0 14 14">
<path d="M1.5 1.5 Q9 1.5 12 11" stroke="#b8b8b8" stroke-width="1" fill="none"/>
<path d="M0.5 1.5 L3.5 -0.5 L3.5 3.5 Z M12 12.5 L9.5 10 L13.5 9.5 Z" fill="#b8b8b8"/>
</svg>
<svg style="left:1236px;top:152px" width="20" height="20" viewBox="0 0 20 20">
<path d="M2 18 L11 9" stroke="#b8b8b8" stroke-width="3" stroke-linecap="round"/>
<circle cx="15" cy="5" r="3.8" fill="#c78a6a"/>
<path d="M10 7 L13 10 L11 11.5 L8.5 9 Z" fill="#b06c50"/>
</svg>
<svg style="left:1254px;top:151px" width="20" height="20" viewBox="0 0 20 20"><circle cx="10" cy="9.7" r="7.6" fill="#f00" stroke="#4a4a4a" stroke-width="1.8"/></svg>
<!-- lock / model -->
<div class="a" style="left:1327px;top:177px;width:18px;height:18px;background:#262626"></div>
<svg style="left:1331px;top:180px" width="10" height="12" viewBox="0 0 10 12"><path d="M2.5 5 L2.5 3.5 A2.5 2.5 0 0 1 7.5 3.5" stroke="#8a8a8a" stroke-width="1.3" fill="none"/><rect x="1" y="5" width="8" height="6.5" fill="#8a8a8a"/></svg>
<div class="a" style="left:1350px;top:178px;width:78px;height:16px;background:#3d3d3d;border-radius:2px"></div>
<div class="t" style="left:1354px;top:181px;font-size:11px;color:#f4f4f4;-webkit-text-stroke:0.25px #f4f4f4">RGB</div>
<svg style="left:1417px;top:184px" width="7" height="5" viewBox="0 0 8 5"><path d="M0.5 0.5 L4 4 L7.5 0.5" stroke="#d0d0d0" stroke-width="1.2" fill="none"/></svg>
<!-- sliders -->
<div class="t" style="left:1189px;top:204px;font-size:11px;color:#a8a8a8">R:</div>
<div class="t" style="left:1188px;top:228px;font-size:11px;color:#a8a8a8">G:</div>
<div class="t" style="left:1189px;top:252px;font-size:11px;color:#a8a8a8">B:</div>
<div class="a" style="left:1203px;top:205px;width:181px;height:9px;border-radius:5px;background:linear-gradient(90deg,rgb(0,110,255),rgb(255,110,255))"></div>
<div class="a" style="left:1203px;top:229px;width:181px;height:9px;border-radius:5px;background:linear-gradient(90deg,rgb(201,0,255),rgb(201,255,255))"></div>
<div class="a" style="left:1203px;top:253px;width:181px;height:9px;border-radius:5px;background:linear-gradient(90deg,rgb(201,110,0),rgb(201,110,255))"></div>
<div class="a" style="left:1337px;top:203px;width:12px;height:12px;border-radius:50%;background:#c96eff;border:1.5px solid #e8e8e8"></div>
<div class="a" style="left:1276px;top:227px;width:12px;height:12px;border-radius:50%;background:#c96eff;border:1.5px solid #e8e8e8"></div>
<div class="a" style="left:1373px;top:251px;width:12px;height:12px;border-radius:50%;background:#c96eff;border:1.5px solid #e8e8e8"></div>
<div class="a" style="left:1389px;top:199px;width:40px;height:20px;background:#252525;border-radius:2px"></div>
<div class="a" style="left:1389px;top:223px;width:40px;height:20px;background:#252525;border-radius:2px"></div>
<div class="a" style="left:1389px;top:247px;width:40px;height:20px;background:#252525;border-radius:2px"></div>
<div class="t" style="left:1395px;top:203px;font-size:12px;color:#f0f0f0">201</div>
<div class="t" style="left:1395px;top:227px;font-size:12px;color:#f0f0f0">110</div>
<div class="t" style="left:1395px;top:251px;font-size:12px;color:#f0f0f0">255</div>
<!-- spectrum -->
<div class="a" style="left:1188px;top:271px;width:241px;height:56px;background:#1a1a1a"></div>
<div class="a" style="left:1189px;top:272px;width:239px;height:54px;background:linear-gradient(180deg,#fff 0%,rgba(255,255,255,0) 50%,rgba(0,0,0,0) 50%,#000 100%),linear-gradient(90deg,#f00 0%,#ff0 16.7%,#0f0 33.3%,#0ff 50%,#00f 66.7%,#f0f 83.3%,#f00 100%)"></div>
<div class="t" style="left:1188px;top:333px;font-size:10px;color:#c0c0c0">不透明度</div>
<svg style="left:1190px;top:345px" width="20" height="20" viewBox="0 0 20 20"><circle cx="9.8" cy="10.2" r="7" fill="#c96eff" stroke="#262626" stroke-width="1.8"/></svg>
<div class="a" style="left:1214px;top:351px;width:147px;height:9px;border-radius:5px;background:linear-gradient(90deg,#f0f0f0,rgba(240,240,240,0)),repeating-conic-gradient(#6a6a6a 0 25%,#505050 0 50%) 0 0/6px 6px"></div>
<div class="a" style="left:1349px;top:349px;width:13px;height:13px;border-radius:50%;background:#2a2a2a;border:1.8px solid #e8e8e8"></div>
<div class="a" style="left:1366px;top:345px;width:43px;height:18px;background:#252525;border-radius:2px 0 0 2px"></div>
<div class="a" style="left:1409px;top:345px;width:15px;height:18px;background:#3d3d3d;border-radius:0 2px 2px 0"></div>
<div class="t" style="left:1371px;top:348px;font-size:12px;color:#f0f0f0">100 %</div>
<svg style="left:1413px;top:352px" width="8" height="5" viewBox="0 0 8 5"><path d="M0.5 0.5 L4 4 L7.5 0.5" stroke="#d0d0d0" stroke-width="1.2" fill="none"/></svg>

<!-- layers panel -->
<div class="a" style="left:1174px;top:371px;width:265px;height:1px;background:#262626"></div>
<div class="a" style="left:1174px;top:372px;width:265px;height:29px;background:#292929"></div>
<div class="a" style="left:1192px;top:374px;width:32px;height:27px;background:#353535"></div>
<div class="a" style="left:1181px;top:383px;width:1px;height:8px;background:#a0a0a0"></div>
<div class="a" style="left:1184px;top:383px;width:1px;height:8px;background:#a0a0a0"></div>
<div class="ptab" style="left:1197px;top:381px;color:#f0f0f0">图层</div>
<div class="ptab" style="left:1229px;top:381px">通道</div>
<div class="ptab" style="left:1261px;top:381px">画笔</div>
<div class="ptab" style="left:1293px;top:381px">库存</div>
<div class="a" style="left:1421px;top:381px;width:10px;height:2px;background:#c8c8c8;box-shadow:0 4px 0 #c8c8c8,0 8px 0 #c8c8c8"></div>
<div class="t" style="left:1182px;top:410px;font-size:10.5px;color:#7a7a7a">不透明度:</div>
<div class="a" style="left:1228px;top:406px;width:55px;height:19px;background:#303030;border-radius:2px"></div>
<div class="t" style="left:1234px;top:410px;font-size:12px;color:#c0c0c0">100 %</div>
<svg style="left:1271px;top:413px" width="8" height="5" viewBox="0 0 8 5"><path d="M0.5 0.5 L4 4 L7.5 0.5" stroke="#b0b0b0" stroke-width="1.1" fill="none"/></svg>
<div class="a" style="left:1287px;top:406px;width:103px;height:19px;background:#303030;border-radius:2px"></div>
<div class="t" style="left:1292px;top:410px;font-size:12px;color:#c0c0c0">正常</div>
<svg style="left:1379px;top:413px" width="8" height="5" viewBox="0 0 8 5"><path d="M0.5 0.5 L4 4 L7.5 0.5" stroke="#b0b0b0" stroke-width="1.1" fill="none"/></svg>
<svg style="left:1396px;top:410px" width="11" height="11" viewBox="0 0 11 11">
<circle cx="5.5" cy="5.5" r="3.5" fill="none" stroke="#a0a0a0" stroke-width="2.4" stroke-dasharray="1.8 1"/>
<circle cx="5.5" cy="5.5" r="2.8" fill="none" stroke="#a0a0a0" stroke-width="1.6"/>
</svg>
<svg style="left:1419px;top:409px" width="10" height="13" viewBox="0 0 10 13"><path d="M2.5 6 L2.5 3.5 A2.5 2.5 0 0 1 7.5 3.5" stroke="#a0a0a0" stroke-width="1.3" fill="none"/><rect x="1" y="6" width="8" height="6.5" fill="#a0a0a0"/></svg>
<!-- layer list -->
<div class="a" style="left:1174px;top:431px;width:248px;height:96px;background:#1c1c1c;overflow:hidden">
 <div class="a" style="left:1px;top:1px;width:16px;height:35px;background:#353535"></div>
 <div class="a" style="left:18px;top:1px;width:35px;height:35px;background:#353535"></div>
 <div class="a" style="left:55px;top:1px;width:192px;height:35px;background:#353535"></div>
 <div class="a" style="left:1px;top:38px;width:16px;height:35px;background:#353535"></div>
 <div class="a" style="left:18px;top:38px;width:35px;height:35px;background:#353535"></div>
 <div class="a" style="left:55px;top:38px;width:192px;height:35px;background:#353535"></div>
 <div class="a" style="left:1px;top:75px;width:16px;height:35px;background:#353535"></div>
 <div class="a" style="left:18px;top:75px;width:35px;height:35px;background:#353535"></div>
 <div class="a" style="left:55px;top:75px;width:192px;height:35px;background:#353535"></div>
</div>
<svg style="left:1178px;top:444px" width="11" height="11" viewBox="0 0 11 11">
<rect x="0.5" y="0.5" width="4" height="4" fill="#b0b0b0"/><path d="M8 0.5 L10.5 4.5 L5.5 4.5 Z" fill="#b0b0b0"/><circle cx="2.5" cy="8.5" r="2" fill="#b0b0b0"/><path d="M8 6 L10.5 8.5 L8 11 L5.5 8.5 Z" fill="#b0b0b0"/>
</svg>
<div class="a" style="left:1193px;top:434px;width:34px;height:32px;background:repeating-conic-gradient(#a2a2a2 0 25%,#7a7a7a 0 50%) 0 0/4px 4px;outline:1px solid #5a5a5a"></div>
<svg style="left:1193px;top:434px" width="34" height="32" viewBox="0 0 34 32"><use href="#hrt" fill="#c96eff" transform="translate(7 3) scale(0.168)"/></svg>
<div class="t" style="left:1232px;top:443px;font-size:12px;color:#c8c8c8">心形</div>
<div class="a" style="left:1400px;top:445px;width:9px;height:9px;border-radius:50%;background:#9a9a9a"></div>
<svg style="left:1178px;top:481px" width="11" height="11" viewBox="0 0 11 11">
<rect x="0.5" y="0.5" width="4" height="4" fill="#b0b0b0"/><path d="M8 0.5 L10.5 4.5 L5.5 4.5 Z" fill="#b0b0b0"/><circle cx="2.5" cy="8.5" r="2" fill="#b0b0b0"/><path d="M8 6 L10.5 8.5 L8 11 L5.5 8.5 Z" fill="#b0b0b0"/>
</svg>
<div class="a" style="left:1193px;top:471px;width:34px;height:32px;background:repeating-conic-gradient(#a2a2a2 0 25%,#7a7a7a 0 50%) 0 0/4px 4px;outline:1px solid #5a5a5a"></div>
<svg style="left:1193px;top:471px" width="34" height="32" viewBox="0 0 34 32"><use href="#hrt" fill="#0066ff" transform="translate(7 3) scale(0.168)"/></svg>
<div class="t" style="left:1232px;top:480px;font-size:12px;color:#c8c8c8">心形</div>
<div class="a" style="left:1400px;top:482px;width:9px;height:9px;border-radius:50%;background:#9a9a9a"></div>
<svg style="left:1178px;top:518px" width="11" height="11" viewBox="0 0 11 11">
<rect x="0.5" y="0.5" width="4" height="4" fill="#b0b0b0"/><path d="M8 0.5 L10.5 4.5 L5.5 4.5 Z" fill="#b0b0b0"/><circle cx="2.5" cy="8.5" r="2" fill="#b0b0b0"/><path d="M8 6 L10.5 8.5 L8 11 L5.5 8.5 Z" fill="#b0b0b0"/>
</svg>
<div class="a" style="left:1193px;top:508px;width:34px;height:32px;background:repeating-conic-gradient(#a2a2a2 0 25%,#7a7a7a 0 50%) 0 0/4px 4px;outline:1px solid #5a5a5a"></div>
<svg style="left:1193px;top:508px" width="34" height="32" viewBox="0 0 34 32"><use href="#hrt" fill="#2bff24" transform="translate(7 3) scale(0.168)"/></svg>
<div class="t" style="left:1232px;top:517px;font-size:12px;color:#c8c8c8">心形</div>
<div class="a" style="left:1400px;top:519px;width:9px;height:9px;border-radius:50%;background:#9a9a9a"></div>
<div class="a" style="left:1174px;top:527px;width:265px;height:26px;background:#333"></div>
<div class="a" style="left:1422px;top:431px;width:17px;height:96px;background:#3c3c3c"></div>
<svg style="left:1426px;top:436px" width="9" height="7" viewBox="0 0 9 7"><path d="M0 7 L4.5 0 L9 7 Z" fill="#8a8a8a"/></svg>
<svg style="left:1426px;top:514px" width="9" height="7" viewBox="0 0 9 7"><path d="M0 0 L4.5 7 L9 0 Z" fill="#8a8a8a"/></svg>
<div class="a" style="left:1427px;top:449px;width:7px;height:30px;background:#8a8a8a;border-radius:4px"></div>

<div class="a" style="left:1179px;top:529px;width:21px;height:20px;background:#262626"></div>
<svg style="left:1182px;top:531px" width="15" height="15" viewBox="0 0 15 15">
<rect x="4.5" y="4.5" width="9" height="9" fill="none" stroke="#8a8a8a"/><rect x="2.5" y="2.5" width="9" height="9" fill="#262626" stroke="#a0a0a0"/><rect x="0.5" y="0.5" width="9" height="9" fill="#262626" stroke="#c8c8c8"/>
</svg>
<svg style="left:1274px;top:533px" width="14" height="12" viewBox="0 0 14 12"><rect width="14" height="12" fill="#a0a0a0"/><circle cx="7" cy="6" r="3.5" fill="#333"/></svg>
<svg style="left:1294px;top:532px" width="14" height="14" viewBox="0 0 14 14"><circle cx="7" cy="7" r="6.3" fill="none" stroke="#a0a0a0" stroke-width="1.1"/><path d="M3 11 L11 3 A5.5 5.5 0 0 1 3 11 Z" fill="#a0a0a0"/></svg>
<svg style="left:1315px;top:532px" width="12" height="14" viewBox="0 0 12 14"><path d="M0 0.5 L12 0.5 M0 13.5 L12 13.5" stroke="#a0a0a0"/><text x="0.5" y="11.3" font-size="9.5" font-family="Liberation Sans" fill="#a8a8a8" stroke="#a8a8a8" stroke-width="0.3" textLength="11">FX</text></svg>
<svg style="left:1336px;top:533px" width="10" height="12" viewBox="0 0 10 12"><path d="M0 0 L10 0 L10 1.5 L6 6 L10 10.5 L10 12 L0 12 L0 10.5 L4 6 L0 1.5 Z" fill="#a0a0a0"/></svg>
<svg style="left:1378px;top:533px" width="14" height="13" viewBox="0 0 14 13"><path d="M0 0 L6 0 L7 2 L14 2 L14 13 L0 13 Z" fill="#8a8a8a"/><path d="M2 4 L14 4 L14 13 L2 13 Z" fill="#a0a0a0"/></svg>
<svg style="left:1400px;top:532px" width="10" height="14" viewBox="0 0 10 14"><rect x="0.5" y="0.5" width="9" height="13" fill="none" stroke="#a0a0a0"/><path d="M2 2h2v2h-2zM6 2h2v2h-2zM4 4h2v2h-2zM2 6h2v2h-2zM6 6h2v2h-2zM4 8h2v2h-2zM2 10h2v2h-2zM6 10h2v2h-2z" fill="#a0a0a0"/></svg>
<svg style="left:1420px;top:532px" width="11" height="14" viewBox="0 0 11 14"><path d="M0 2.5 L11 2.5 M4 0.5 L7 0.5" stroke="#a0a0a0" stroke-width="1.2"/><path d="M1.5 4 L2 13.5 L9 13.5 L9.5 4 M4 5 L4 12 M7 5 L7 12" stroke="#a0a0a0" stroke-width="1" fill="none"/></svg>

<!-- navigator panel -->
<div class="a" style="left:1174px;top:552px;width:265px;height:1px;background:#262626"></div>
<div class="a" style="left:1174px;top:553px;width:265px;height:29px;background:#292929"></div>
<div class="a" style="left:1192px;top:555px;width:43px;height:27px;background:#353535"></div>
<div class="a" style="left:1181px;top:563px;width:1px;height:8px;background:#a0a0a0"></div>
<div class="a" style="left:1184px;top:563px;width:1px;height:8px;background:#a0a0a0"></div>
<div class="ptab" style="left:1197px;top:562px;color:#f0f0f0">导航器</div>
<div class="ptab" style="left:1240px;top:562px">变换</div>
<div class="ptab" style="left:1272px;top:562px">历史记录</div>
<div class="a" style="left:1421px;top:562px;width:10px;height:2px;background:#c8c8c8;box-shadow:0 4px 0 #c8c8c8,0 8px 0 #c8c8c8"></div>
<div class="a" style="left:1188px;top:593px;width:17px;height:17px;background:#222;border-radius:2px"></div>
<div class="a" style="left:1191px;top:601px;width:11px;height:1.2px;background:#e8e8e8"></div>
<div class="a" style="left:1211px;top:594px;width:142px;height:5px;background:#222;border-radius:3px"></div>
<div class="a" style="left:1211px;top:594px;width:10px;height:5px;background:#5a7eae;border-radius:3px 0 0 3px"></div>
<svg style="left:1218px;top:592px" width="8" height="11" viewBox="0 0 8 11"><path d="M0 1 Q0 0 1 0 L7 0 Q8 0 8 1 L8 7.5 L4 10.5 L0 7.5 Z" fill="#d4d4d4"/></svg>
<svg style="left:1211px;top:607px" width="142" height="4" viewBox="0 0 142 4" style="opacity:.9">
<path d="M3.5 0 L3.5 3 M9.5 0 L9.5 3 M25.5 0 L25.5 3 M47.5 0 L47.5 3 M55.5 0 L55.5 3 M69.5 0 L69.5 3 M84.5 0 L84.5 3 M105.5 0 L105.5 3 M112.5 0 L112.5 3 M121.5 0 L121.5 3 M135.5 0 L135.5 3" stroke="#8a8a8a" stroke-width="1"/>
</svg>
<div class="a" style="left:1358px;top:591px;width:17px;height:19px;background:#222;border-radius:2px"></div>
<div class="a" style="left:1361px;top:600px;width:11px;height:1.2px;background:#e8e8e8"></div>
<div class="a" style="left:1366px;top:595px;width:1.2px;height:11px;background:#e8e8e8"></div>
<div class="a" style="left:1379px;top:591px;width:50px;height:20px;background:#222;border-radius:2px"></div>
<div class="t" style="left:1385px;top:595px;font-size:12px;color:#f0f0f0">14 %</div>
<div class="a" style="left:1174px;top:614px;width:265px;height:1px;background:#2a2a2a"></div>
<div class="a" style="left:1231px;top:622px;width:151px;height:106px;background:#fff;overflow:hidden">
<svg style="left:0;top:0" width="151" height="106" viewBox="245 175 707 499">
<use href="#hrt" fill="#ff6a45" transform="translate(505.3 199.2) scale(0.8)"/>
<use href="#hrt" fill="#0066ff" transform="translate(381 306)"/>
<use href="#hrt" fill="#2bff24" transform="translate(675.5 387.4) scale(0.93)"/>
<use href="#hrt" fill="#c96eff" transform="translate(570.9 487.2) scale(0.975)"/>
</svg>
</div>
<div class="a" style="left:0;top:758px;width:1440px;height:1px;background:#262626"></div>
<!-- watermark -->
<svg style="left:1270px;top:700px" width="60" height="56" viewBox="1270 700 60 56">
<defs>
<linearGradient id="wb" x1="0" y1="0" x2="0" y2="1"><stop offset="0" stop-color="#78c0f4"/><stop offset="0.55" stop-color="#3a88d8"/><stop offset="1" stop-color="#1850a0"/></linearGradient>
<linearGradient id="wgr" x1="1" y1="0" x2="0" y2="1"><stop offset="0" stop-color="#58c070"/><stop offset="0.45" stop-color="#18803a"/><stop offset="1" stop-color="#b0b800"/></linearGradient>
</defs>
<path d="M1326 712.5 Q1305 713 1292 720 Q1282 727 1283 735 Q1285 741 1293 740.5 Q1302 739 1303.5 734 Q1304 730 1297 730.5 Q1293 731.5 1292 733.5" stroke="url(#wb)" stroke-width="3.6" fill="none" stroke-linecap="round" opacity="0.92"/>
<path d="M1298 726.5 Q1310 723 1318 725 Q1323 727 1320 733 Q1314 742 1298 746 Q1290 748 1284 749 Q1296 744 1306 738 Q1316 731 1312 728 Q1306 726 1298 726.5 Z" fill="url(#wgr)" opacity="0.95"/>
</svg>
<div class="t" style="left:1323px;top:710px;font-size:21px;font-weight:bold;color:#1e6ed2;opacity:0.66;-webkit-text-stroke:0.6px #1e6ed2">极光下载站</div>
<div class="t" style="left:1324px;top:735px;font-size:15.5px;font-weight:bold;color:#148a38;letter-spacing:0.2px">www.xz7.com</div>
<svg style="left:1427px;top:745px" width="10" height="9" viewBox="0 0 10 9" shape-rendering="crispEdges">
<rect x="8" y="0" width="1" height="1" fill="#c0c0c0"/><rect x="6" y="2" width="1" height="1" fill="#c0c0c0"/><rect x="8" y="2" width="1" height="1" fill="#c0c0c0"/><rect x="4" y="4" width="1" height="1" fill="#c0c0c0"/><rect x="6" y="4" width="1" height="1" fill="#c0c0c0"/><rect x="8" y="4" width="1" height="1" fill="#c0c0c0"/><rect x="2" y="6" width="1" height="1" fill="#c0c0c0"/><rect x="4" y="6" width="1" height="1" fill="#c0c0c0"/><rect x="6" y="6" width="1" height="1" fill="#c0c0c0"/><rect x="8" y="6" width="1" height="1" fill="#c0c0c0"/><rect x="0" y="8" width="1" height="1" fill="#c0c0c0"/><rect x="2" y="8" width="1" height="1" fill="#c0c0c0"/><rect x="4" y="8" width="1" height="1" fill="#c0c0c0"/><rect x="6" y="8" width="1" height="1" fill="#c0c0c0"/><rect x="8" y="8" width="1" height="1" fill="#c0c0c0"/>
</svg>
</body></html>
